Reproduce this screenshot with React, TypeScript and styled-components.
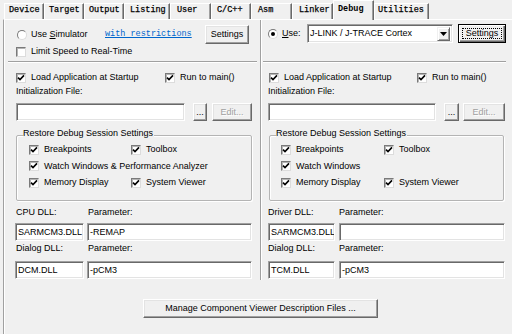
import React from 'react';
import styled, { createGlobalStyle } from 'styled-components';

const GlobalStyle = createGlobalStyle`
  html, body { margin: 0; padding: 0; background: #f0f0f0; }
  body {
    font-family: "Liberation Sans", Arial, sans-serif;
    font-size: 9px;
    line-height: 11px;
    color: #000;
  }
  * { box-sizing: border-box; }
`;

const Dialog = styled.div`
  width: 512px;
  height: 334px;
  overflow: hidden;
  background: #f0f0f0;
  display: flex;
  flex-direction: column;
`;

const TabStrip = styled.div`
  display: flex;
  align-items: flex-end;
  height: 19px;
  padding-left: 4px;
  position: relative;
  z-index: 1;
  flex: none;
`;

const Tab = styled.div<{ $w: number; $pad: number; $active?: boolean }>`
  width: ${p => p.$w}px;
  height: ${p => (p.$active ? 20 : 16)}px;
  margin-bottom: ${p => (p.$active ? -1 : 0)}px;
  padding-left: ${p => p.$pad}px;
  padding-top: ${p => (p.$active ? 2 : 0)}px;
  font-family: "Liberation Mono", "DejaVu Sans Mono", monospace;
  font-size: 8.5px;
  font-weight: ${p => (p.$active ? 'bold' : 'normal')};
  -webkit-text-stroke: ${p => (p.$active ? '0' : '0.25px')} #000;
  line-height: 12px;
  background: #f0f0f0;
  border-top: 1px solid #fff;
  border-left: 1px solid #fff;
  border-right: 1px solid #696969;
  box-shadow: inset -1px 0 #a0a0a0;
  white-space: nowrap;
  flex: none;
`;

const Page = styled.div`
  flex: 1;
  margin-left: 3px;
  padding-left: 1px;
  border-top: 1px solid #fff;
  border-left: 1px solid #a0a0a0;
  box-shadow: inset 1px 0 #fff;
  display: flex;
  flex-direction: column;
  position: relative;
  z-index: 0;
`;

const Columns = styled.div`
  display: grid;
  grid-template-columns: 255px 2px 1fr;
  height: 260px;
`;

const VDivider = styled.div`
  border-left: 1px solid #a0a0a0;
  border-right: 1px solid #fff;
`;

const Side = styled.div<{ $pad: number }>`
  display: flex;
  flex-direction: column;
  padding-left: ${p => p.$pad}px;
`;

const TopSection = styled.div`
  height: 41px;
  display: flex;
  flex-direction: column;
`;

const UseRow = styled.div<{ $mt: number; $pl?: number }>`
  display: flex;
  align-items: center;
  height: 19px;
  margin-top: ${p => p.$mt}px;
  padding-left: ${p => p.$pl ?? 0}px;
`;

const RadioLabel = styled.div<{ $w: number }>`
  width: ${p => p.$w}px;
  flex: none;
  display: flex;
  align-items: center;
  gap: 4px;
  white-space: nowrap;
`;

const Radio = styled.span<{ $checked?: boolean }>`
  width: 10px;
  height: 10px;
  border-radius: 50%;
  background: #fff;
  flex: none;
  border: 1px solid;
  border-color: #7a7a7a #dcdcdc #dcdcdc #7a7a7a;
  display: inline-flex;
  align-items: center;
  justify-content: center;
  &::after {
    content: '';
    width: 4px;
    height: 4px;
    border-radius: 50%;
    background: #000;
    display: ${p => (p.$checked ? 'block' : 'none')};
  }
`;

const Link = styled.span<{ $w: number }>`
  width: ${p => p.$w}px;
  flex: none;
  font-family: "Liberation Mono", "DejaVu Sans Mono", monospace;
  font-size: 8.5px;
  color: #0066cc;
  text-decoration: underline;
  white-space: nowrap;
`;

const Btn = styled.div<{ $w: number; $h?: number; $disabled?: boolean }>`
  width: ${p => p.$w}px;
  height: ${p => p.$h ?? 18}px;
  flex: none;
  display: flex;
  align-items: center;
  justify-content: center;
  background: #f0f0f0;
  border: 1px solid;
  border-color: #fff #696969 #696969 #fff;
  box-shadow: inset -1px -1px #a0a0a0, inset 1px 1px #e3e3e3;
  color: ${p => (p.$disabled ? '#a0a0a0' : '#000')};
  text-shadow: ${p => (p.$disabled ? '1px 1px #fff' : 'none')};
  white-space: nowrap;
`;

const DefaultBtn = styled.div<{ $w: number }>`
  width: ${p => p.$w}px;
  height: 19px;
  flex: none;
  display: flex;
  padding: 3px;
  background: #f0f0f0;
  border: 1px solid #000;
  box-shadow: inset 1px 1px #fff, inset -1px -1px #696969, inset -2px -2px #a0a0a0;
`;

const FocusRing = styled.div`
  flex: 1;
  border: 1px dotted #000;
  display: flex;
  align-items: center;
  justify-content: center;
`;

const Field = styled.div<{ $w: number; $h?: number }>`
  width: ${p => p.$w}px;
  height: ${p => p.$h ?? 18}px;
  flex: none;
  background: #fff;
  border: 1px solid;
  border-color: #a0a0a0 #fff #fff #a0a0a0;
  box-shadow: inset 1px 1px #696969, inset -1px -1px #e3e3e3;
  padding: 0 2px;
  display: flex;
  align-items: center;
  white-space: nowrap;
  overflow: hidden;
`;

const SelectBox = styled(Field)`
  justify-content: space-between;
  padding-right: 2px;
  margin-right: 5px;
`;

const DropBtn = styled.div`
  width: 13px;
  height: 14px;
  display: flex;
  align-items: center;
  justify-content: center;
  background: #f0f0f0;
  border: 1px solid;
  border-color: #f0f0f0 #696969 #696969 #f0f0f0;
  box-shadow: inset 1px 1px #fff, inset -1px -1px #a0a0a0;
`;

const CheckItem = styled.div<{ $gap?: number }>`
  display: flex;
  align-items: center;
  gap: ${p => p.$gap ?? 5}px;
  height: 11px;
  white-space: nowrap;
`;

const Box = styled.span`
  width: 10px;
  height: 10px;
  background: #fff;
  flex: none;
  border: 1px solid;
  border-color: #7a7a7a #dcdcdc #dcdcdc #7a7a7a;
  box-shadow: inset 1px 1px #b4b4b4;
  display: inline-flex;
  align-items: center;
  justify-content: center;
`;

const TopCheckRow = styled.div`
  margin-top: 2px;
`;

const HSeparator = styled.div<{ $ml: number; $w: number }>`
  margin-left: ${p => p.$ml}px;
  width: ${p => p.$w}px;
  height: 2px;
  border-top: 1px solid #a0a0a0;
  border-bottom: 1px solid #fff;
  flex: none;
`;

const TwoCol = styled.div<{ $col: number; $mt: number; $pl?: number }>`
  display: grid;
  grid-template-columns: ${p => p.$col}px auto;
  margin-top: ${p => p.$mt}px;
  padding-left: ${p => p.$pl ?? 0}px;
  height: 11px;
  white-space: nowrap;
`;

const Caption = styled.div<{ $mt: number }>`
  margin-top: ${p => p.$mt}px;
  height: 11px;
  white-space: nowrap;
`;

const FieldRow = styled.div<{ $mt: number; $ml?: number }>`
  display: flex;
  margin-top: ${p => p.$mt}px;
  margin-left: ${p => p.$ml ?? 0}px;
`;

const Spacer = styled.div<{ $w: number }>`
  width: ${p => p.$w}px;
  flex: none;
`;

const GroupBox = styled.div<{ $w: number; $ml: number; $pl: number }>`
  position: relative;
  margin-top: 14px;
  margin-left: ${p => p.$ml}px;
  width: ${p => p.$w}px;
  height: 66px;
  border: 1px solid #b4b4b4;
  border-radius: 2px;
  box-shadow: 1px 1px #fff, inset 1px 1px #fff;
  padding: 8px 0 0 ${p => p.$pl}px;
`;

const GroupTitle = styled.span`
  position: absolute;
  top: -8px;
  left: 6px;
  padding: 0 1px 0 0;
  background: #f0f0f0;
  line-height: 11px;
  white-space: nowrap;
`;

const GroupGrid = styled.div<{ $col: number }>`
  display: grid;
  grid-template-columns: ${p => p.$col}px auto;
  row-gap: 5.5px;
`;

const Wide = styled.div`
  grid-column: 1 / span 2;
`;

const BottomBar = styled.div`
  display: flex;
  padding-left: 138px;
  margin-top: 19px;
`;

const CheckMark = () => (
  <svg width="8" height="8" viewBox="0 0 8 8">
    <polyline points="1,3.6 3,5.6 7,1.4" fill="none" stroke="#000" strokeWidth="1.6" />
  </svg>
);

const Check: React.FC<{ label: string; gap?: number }> = ({ label, gap }) => (
  <CheckItem $gap={gap}>
    <Box>
      <CheckMark />
    </Box>
    <span>{label}</span>
  </CheckItem>
);

const EmptyCheck: React.FC<{ label: string }> = ({ label }) => (
  <CheckItem>
    <Box />
    <span>{label}</span>
  </CheckItem>
);

type SideCfg = {
  pad: number;
  sepMl: number;
  sepW: number;
  loadCol: number;
  loadPl: number;
  init: [number, number, number];
  initGaps: [number, number];
  groupW: number;
  groupMl: number;
  groupPl: number;
  groupCol: number;
  watch: string;
  dllLabel: string;
  dllCol: number;
  dllMl: number;
  dllW: [number, number];
  dllGap: number;
  dll1: string;
  param1: string;
  dll2: string;
  param2: string;
};

const leftCfg: SideCfg = {
  pad: 11,
  sepMl: -8,
  sepW: 249,
  loadCol: 149,
  loadPl: 0,
  init: [169, 14, 40],
  initGaps: [8, 5],
  groupW: 236,
  groupMl: 0,
  groupPl: 12,
  groupCol: 102,
  watch: 'Watch Windows & Performance Analyzer',
  dllLabel: 'CPU DLL:',
  dllCol: 72,
  dllMl: -1,
  dllW: [69, 165],
  dllGap: 3,
  dll1: 'SARMCM3.DLL',
  param1: '-REMAP',
  dll2: 'DCM.DLL',
  param2: '-pCM3',
};

const rightCfg: SideCfg = {
  pad: 6,
  sepMl: -5,
  sepW: 243,
  loadCol: 148,
  loadPl: 1,
  init: [168, 15, 42],
  initGaps: [8, 4],
  groupW: 235,
  groupMl: 1,
  groupPl: 11,
  groupCol: 103,
  watch: 'Watch Windows',
  dllLabel: 'Driver DLL:',
  dllCol: 71,
  dllMl: 0,
  dllW: [67, 166],
  dllGap: 4,
  dll1: 'SARMCM3.DLL',
  param1: '',
  dll2: 'TCM.DLL',
  param2: '-pCM3',
};

const LowerSection: React.FC<{ c: SideCfg }> = ({ c }) => (
  <>
    <HSeparator $ml={c.sepMl} $w={c.sepW} />
    <TwoCol $col={c.loadCol} $mt={9} $pl={c.loadPl}>
      <Check label="Load Application at Startup" />
      <Check label="Run to main()" />
    </TwoCol>
    <Caption $mt={3}>Initialization File:</Caption>
    <FieldRow $mt={6}>
      <Field $w={c.init[0]} />
      <Spacer $w={c.initGaps[0]} />
      <Btn $w={c.init[1]}>...</Btn>
      <Spacer $w={c.initGaps[1]} />
      <Btn $w={c.init[2]} $disabled>
        Edit...
      </Btn>
    </FieldRow>
    <GroupBox $w={c.groupW} $ml={c.groupMl} $pl={c.groupPl}>
      <GroupTitle>Restore Debug Session Settings</GroupTitle>
      <GroupGrid $col={c.groupCol}>
        <Check label="Breakpoints" />
        <Check label="Toolbox" />
        <Wide>
          <Check label={c.watch} />
        </Wide>
        <Check label="Memory Display" />
        <Check label="System Viewer" />
      </GroupGrid>
    </GroupBox>
    <TwoCol $col={c.dllCol} $mt={6}>
      <span>{c.dllLabel}</span>
      <span>Parameter:</span>
    </TwoCol>
    <FieldRow $mt={5} $ml={c.dllMl}>
      <Field $w={c.dllW[0]}>{c.dll1}</Field>
      <Spacer $w={c.dllGap} />
      <Field $w={c.dllW[1]}>{c.param1}</Field>
    </FieldRow>
    <TwoCol $col={c.dllCol} $mt={2}>
      <span>Dialog DLL:</span>
      <span>Parameter:</span>
    </TwoCol>
    <FieldRow $mt={7} $ml={c.dllMl}>
      <Field $w={c.dllW[0]}>{c.dll2}</Field>
      <Spacer $w={c.dllGap} />
      <Field $w={c.dllW[1]}>{c.param2}</Field>
    </FieldRow>
  </>
);

const tabs: { name: string; w: number; pad: number }[] = [
  { name: 'Device', w: 40, pad: 4 },
  { name: 'Target', w: 40, pad: 4 },
  { name: 'Output', w: 40, pad: 4 },
  { name: 'Listing', w: 46, pad: 5 },
  { name: 'User', w: 41, pad: 6 },
  { name: 'C/C++', w: 40, pad: 5 },
  { name: 'Asm', w: 41, pad: 6 },
  { name: 'Linker', w: 41, pad: 6 },
  { name: 'Debug', w: 41, pad: 4 },
  { name: 'Utilities', w: 55, pad: 3 },
];

export default function App() {
  return (
    <>
      <GlobalStyle />
      <Dialog>
        <TabStrip>
          {tabs.map(t => (
            <Tab key={t.name} $w={t.w} $pad={t.pad} $active={t.name === 'Debug'}>
              {t.name}
            </Tab>
          ))}
        </TabStrip>
        <Page>
          <Columns>
            <Side $pad={leftCfg.pad}>
              <TopSection>
                <UseRow $mt={5} $pl={1}>
                  <RadioLabel $w={88}>
                    <Radio />
                    <span>
                      Use <u>S</u>imulator
                    </span>
                  </RadioLabel>
                  <Link $w={100}>with restrictions</Link>
                  <Btn $w={44} $h={19}>
                    Settings
                  </Btn>
                </UseRow>
                <TopCheckRow>
                  <EmptyCheck label="Limit Speed to Real-Time" />
                </TopCheckRow>
              </TopSection>
              <LowerSection c={leftCfg} />
            </Side>
            <VDivider />
            <Side $pad={rightCfg.pad}>
              <TopSection>
                <UseRow $mt={4}>
                  <RadioLabel $w={39}>
                    <Radio $checked />
                    <span>
                      <u>U</u>se:
                    </span>
                  </RadioLabel>
                  <SelectBox $w={146} $h={19}>
                    <span>J-LINK / J-TRACE Cortex</span>
                    <DropBtn>
                      <svg width="7" height="4" viewBox="0 0 7 4">
                        <polygon points="0,0 7,0 3.5,4" fill="#000" />
                      </svg>
                    </DropBtn>
                  </SelectBox>
                  <DefaultBtn $w={48}>
                    <FocusRing>Settings</FocusRing>
                  </DefaultBtn>
                </UseRow>
              </TopSection>
              <LowerSection c={rightCfg} />
            </Side>
          </Columns>
          <BottomBar>
            <Btn $w={235} $h={19}>
              Manage Component Viewer Description Files ...
            </Btn>
          </BottomBar>
        </Page>
      </Dialog>
    </>
  );
}
